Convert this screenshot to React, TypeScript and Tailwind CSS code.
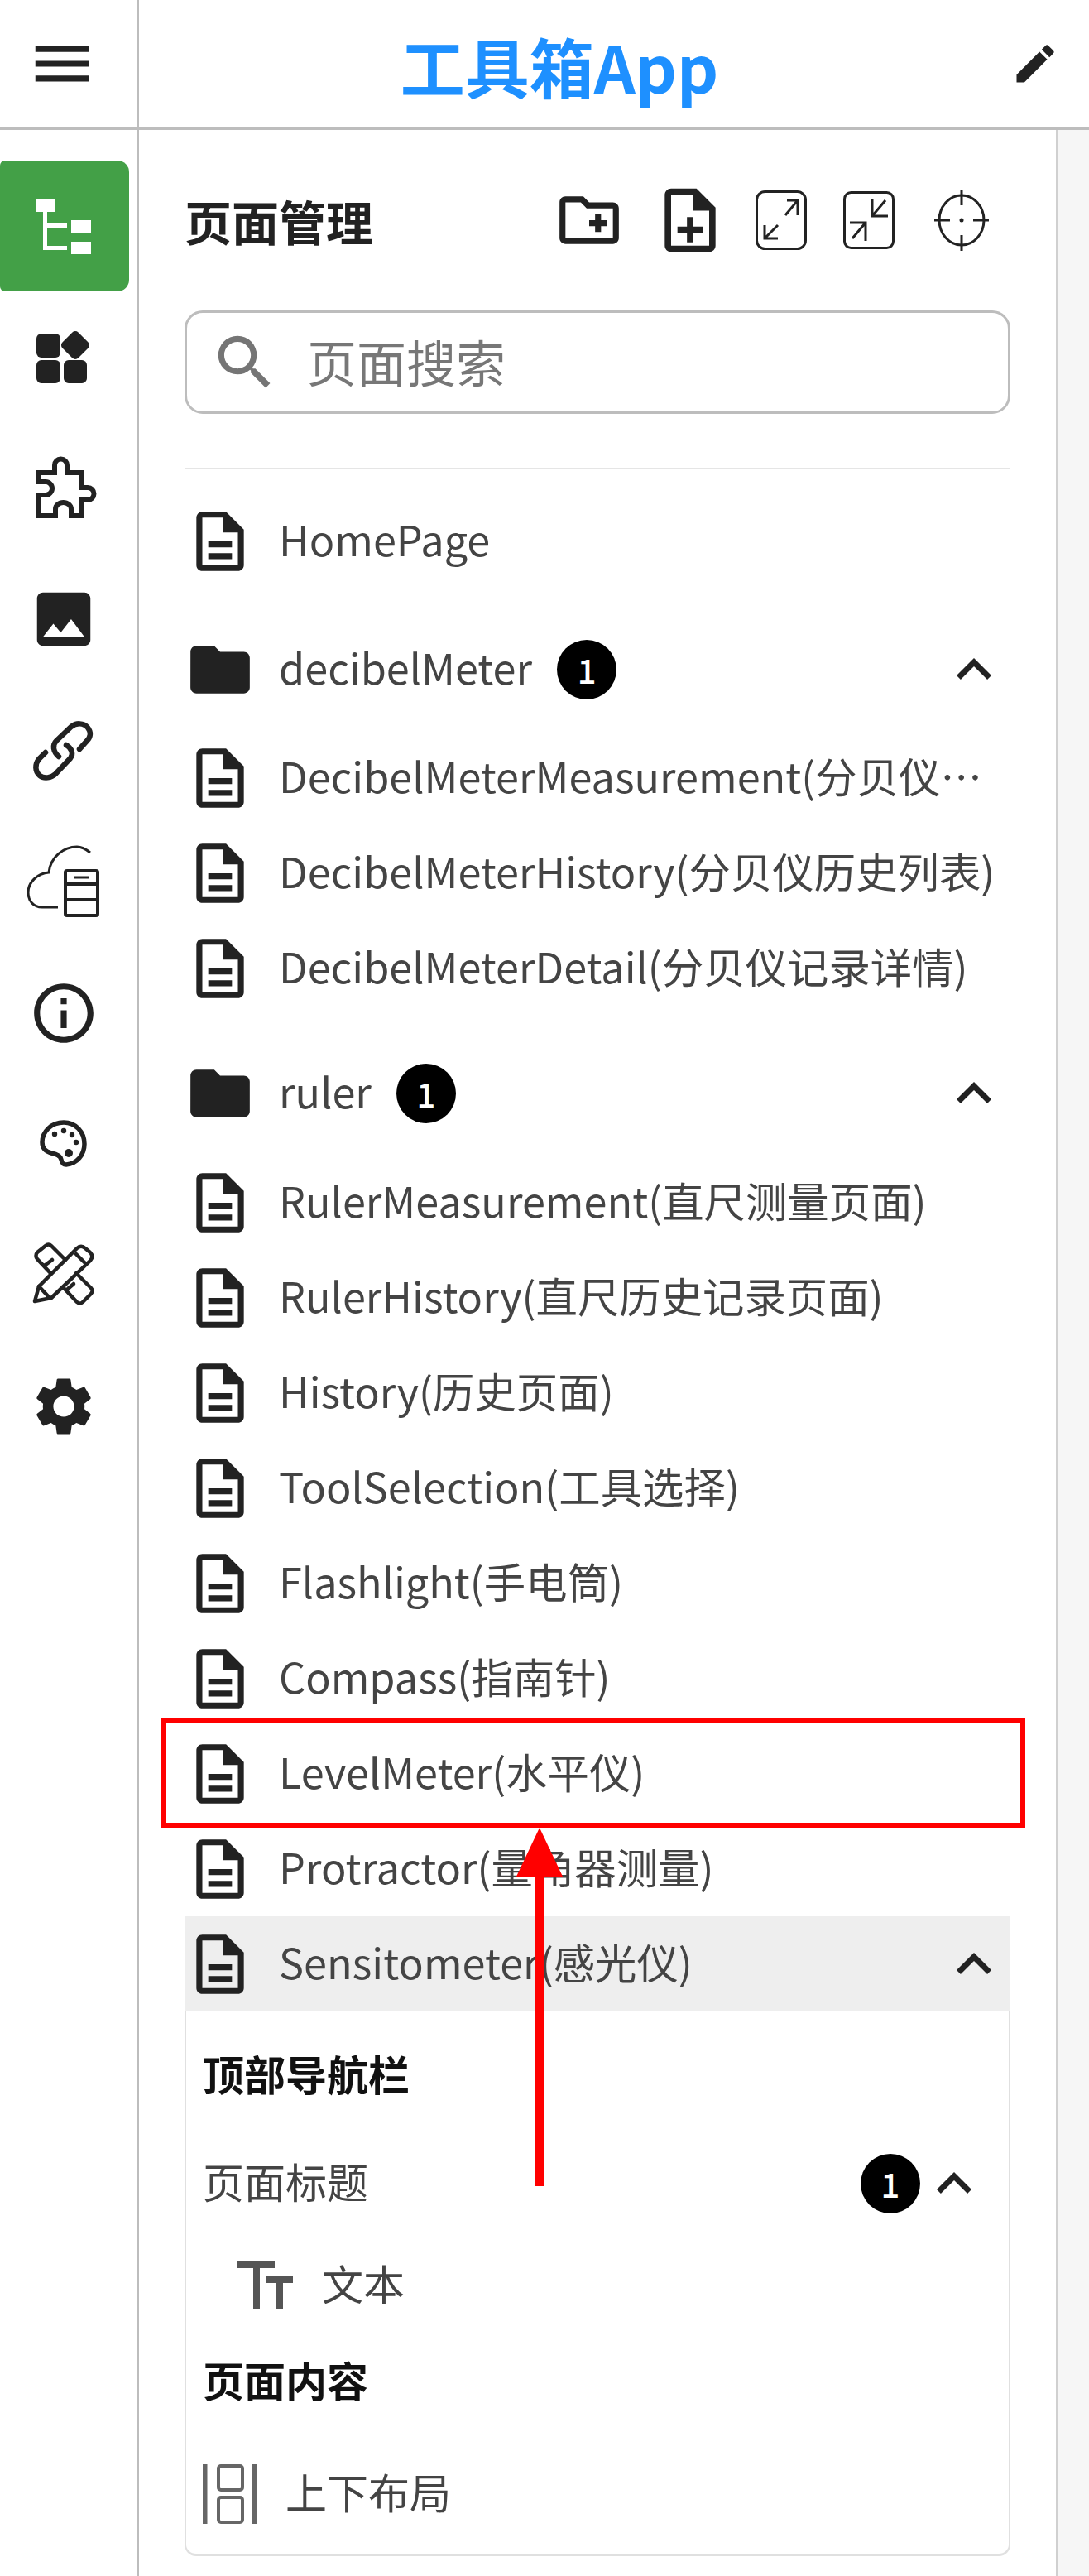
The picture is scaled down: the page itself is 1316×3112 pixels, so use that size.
import {
  MdMenu,
  MdEdit,
  MdOutlineCreateNewFolder,
  MdOutlineNoteAdd,
  MdSearch,
  MdImage,
  MdInfoOutline,
  MdSettings,
  MdOutlineDescription,
  MdFolder,
  MdExpandLess,
} from 'react-icons/md'

function TreeIcon() {
  return (
    <svg width="84" height="84" viewBox="0 0 84 84" fill="#fff">
      <rect x="7" y="10" width="23" height="15" />
      <rect x="50" y="35" width="24" height="15" />
      <rect x="50" y="61" width="24" height="15" />
      <rect x="16" y="25" width="5" height="46" />
      <rect x="16" y="39" width="29" height="5" />
      <rect x="16" y="66" width="29" height="5" />
    </svg>
  )
}

function WidgetsIcon() {
  return (
    <svg width="120" height="120" viewBox="-3 -19 120 120" fill="#222">
      <rect x="24" y="13" width="29" height="29" rx="6" />
      <rect x="24" y="45" width="29" height="28" rx="6" />
      <rect x="57" y="45" width="28" height="28" rx="6" />
      <rect x="57.5" y="13.5" width="27" height="27" rx="5" transform="rotate(45 71 27)" />
    </svg>
  )
}

function PuzzleIcon() {
  return (
    <svg width="120" height="120" viewBox="-3 0 120 120" fill="none" stroke="#222" strokeWidth="6">
      <path d="M27 41H46V32A7.5 7.5 0 0 1 61 32V41H78V59H86A7.5 7.5 0 0 1 86 74H78V93H66V85A9.5 8 0 0 0 47 85V93H27V68H35A8 8 0 0 0 35 52H27Z" />
    </svg>
  )
}

function LinkIcon() {
  return (
    <svg width="120" height="120" viewBox="-3 -3 120 120" fill="none" stroke="#222" strokeWidth="6.5" strokeLinecap="round">
      <path d="M51 64C44 58 43 50 48 45L66 28C72 23 81 23 86 29C90 34 90 40 85 45L76 55" />
      <path d="M35 59L27 67C22 73 22 82 28 87C33 91 42 90 47 85L65 66C69 61 67 54 60 50" />
    </svg>
  )
}

function PaletteIcon() {
  return (
    <svg width="120" height="120" viewBox="-3 2 120 120" fill="none" stroke="#222" strokeWidth="5.5">
      <path d="M57 36C42 36 31 47 31 60C31 68 35 71 42 73C48 74 53 76 54 81C55 86 57 87 60 87C73 86 82 75 82 62C82 47 71 36 57 36Z" />
      <g fill="#222" stroke="none">
        <circle cx="46" cy="50" r="3.2" />
        <circle cx="57" cy="46" r="3.2" />
        <circle cx="67" cy="51" r="3.2" />
        <circle cx="72" cy="60" r="3.2" />
        <circle cx="63" cy="73" r="5" />
      </g>
    </svg>
  )
}

function DesignIcon() {
  return (
    <svg width="120" height="120" viewBox="-3 1 120 120" fill="none" stroke="#222" strokeWidth="4.5" strokeLinejoin="round" strokeLinecap="round">
      <path d="M22 92L27 74L73 28C76 25 80 25 83 28L89 33C92 36 92 40 89 43L42 88Z" />
      <path d="M72 35L83 46M27 74L40 88" />
      <path d="M40 57L25 41C23 39 23 35 25 33L35 25C37 23 40 23 42 25L59 42M35 48L43 42" />
      <path d="M72 58L90 76C92 78 92 81 90 83L80 93C78 95 75 95 73 93L57 76M62 77L69 71" />
    </svg>
  )
}

function CloudServerIcon() {
  return (
    <svg width="88" height="88" viewBox="0 0 88 88" fill="none" stroke="#222" strokeWidth="3">
      <path d="M37 75H18C7 75 1 67 1 57C1 45 12 34 26 33C28 14 44 2 60 2C66 2 71 5 76 9" />
      <rect x="46" y="31" width="39" height="54" rx="2" strokeWidth="4" />
      <path d="M46 47H85M46 66H85" strokeWidth="4" />
      <path d="M57 39H74" />
    </svg>
  )
}

function ExpandBoxIcon() {
  return (
    <svg width="62" height="72" viewBox="0 0 62 72" fill="none" stroke="#222" strokeWidth="3">
      <rect x="1.5" y="1.5" width="59" height="69" rx="10" />
      <path d="M36 30L51 12M38 12H51V30M27 42L11 58M11 42V58H27" />
    </svg>
  )
}

function CompressBoxIcon() {
  return (
    <svg width="62" height="70" viewBox="0 0 62 70" fill="none" stroke="#222" strokeWidth="3">
      <rect x="1.5" y="1.5" width="59" height="67" rx="8" />
      <path d="M51 11L35 30M35 9V30H54M11 57L27 38M8 38H27V60" />
    </svg>
  )
}

function CrosshairIcon() {
  return (
    <svg width="66" height="74" viewBox="0 0 66 74" fill="none" stroke="#222" strokeWidth="3">
      <ellipse cx="33" cy="37" rx="27" ry="30" />
      <path d="M33 0V19M33 55V74M0 37H19M47 37H66" />
      <circle cx="33" cy="37" r="2.5" fill="#222" stroke="none" />
    </svg>
  )
}

function TextIcon() {
  return (
    <svg width="68" height="58" viewBox="0 0 68 58" fill="#555">
      <rect x="0" y="0" width="46" height="8" />
      <rect x="20" y="0" width="8" height="58" />
      <rect x="36" y="18" width="32" height="8" />
      <rect x="48" y="18" width="8" height="40" />
    </svg>
  )
}

function LayoutIcon() {
  return (
    <svg width="66" height="72" viewBox="0 0 66 72" fill="none" stroke="#666" strokeWidth="4">
      <rect x="0" y="0" width="5.5" height="72" fill="#666" stroke="none" />
      <rect x="60" y="0" width="5.5" height="72" fill="#666" stroke="none" />
      <rect x="19" y="2" width="29" height="29" rx="3" />
      <rect x="19" y="40" width="29" height="30" rx="3" />
    </svg>
  )
}

function Badge() {
  return (
    <span className="flex h-[72px] w-[72px] shrink-0 items-center justify-center rounded-full bg-black text-[40px] font-medium text-white">
      1
    </span>
  )
}

function PageRow({ name }: { name: string }) {
  return (
    <div className="flex h-[115px] items-center">
      <MdOutlineDescription size={86} className="shrink-0 text-[#222]" />
      <span className="ml-[28px] max-w-[875px] truncate pb-[5px] text-[50.4px] text-[#444]">{name}</span>
    </div>
  )
}

function FolderRow({ name }: { name: string }) {
  return (
    <div className="flex h-[115px] items-center">
      <MdFolder size={86} className="shrink-0 text-[#222]" />
      <span className="ml-[28px] pb-[5px] text-[50.4px] text-[#444]">{name}</span>
      <span className="ml-[30px]">
        <Badge />
      </span>
      <MdExpandLess size={84} className="ml-auto mr-[2px] text-[#222]" />
    </div>
  )
}

const sideIcons = [
  <WidgetsIcon key="widgets" />,
  <PuzzleIcon key="ext" />,
  <MdImage key="img" size={86} />,
  <LinkIcon key="link" />,
  <CloudServerIcon key="cloud" />,
  <MdInfoOutline key="info" size={86} />,
  <PaletteIcon key="palette" />,
  <DesignIcon key="design" />,
  <MdSettings key="settings" size={84} />,
]

const decibelPages = [
  'DecibelMeterMeasurement(分贝仪测量页面)',
  'DecibelMeterHistory(分贝仪历史列表)',
  'DecibelMeterDetail(分贝仪记录详情)',
]

const rulerPages = [
  'RulerMeasurement(直尺测量页面)',
  'RulerHistory(直尺历史记录页面)',
  'History(历史页面)',
  'ToolSelection(工具选择)',
  'Flashlight(手电筒)',
  'Compass(指南针)',
  'LevelMeter(水平仪)',
  'Protractor(量角器测量)',
]

export default function App() {
  return (
    <div className="relative flex h-[3112px] w-[1316px] flex-col overflow-hidden bg-white font-['Noto_Sans_CJK_SC',sans-serif]">
      {/* Header */}
      <div className="flex h-[157px] shrink-0 border-b-[3px] border-[#bdbdbd]">
        <div className="flex w-[168px] shrink-0 items-center justify-center border-r-2 border-[#bdbdbd] pr-[16px]">
          <MdMenu size={86} className="text-[#222]" />
        </div>
        <div className="flex flex-1 items-center justify-center pr-[2px] pt-[3px] text-[78px] font-bold leading-none text-[#1e90ff]">
          工具箱App
        </div>
        <div className="flex w-[130px] shrink-0 items-center justify-center">
          <MdEdit size={60} className="text-[#222]" />
        </div>
      </div>

      <div className="flex min-h-0 flex-1">
        {/* Side nav */}
        <div className="flex w-[168px] shrink-0 flex-col border-r-2 border-[#bdbdbd] pt-[37px] text-[#222]">
          <div className="flex h-[158px] w-[156px] items-center justify-center rounded-r-[14px] rounded-l-[6px] bg-[#43a047]">
            <TreeIcon />
          </div>
          {sideIcons.map((icon, i) => (
            <div key={i} className="flex h-[158.5px] w-[154px] items-center justify-center">
              {icon}
            </div>
          ))}
        </div>

        {/* Page tree */}
        <div className="min-w-0 flex-1 px-[55px]">
          <div className="mt-[42px] flex h-[120px] items-center justify-between pt-[14px]">
            <span className="text-[57px] font-bold leading-none text-[#222]">页面管理</span>
            <div className="mr-[26px] flex items-center text-[#222]">
              <MdOutlineCreateNewFolder size={86} />
              <MdOutlineNoteAdd size={92} className="ml-[33px]" />
              <span className="ml-[33px]">
                <ExpandBoxIcon />
              </span>
              <span className="ml-[44px]">
                <CompressBoxIcon />
              </span>
              <span className="ml-[48px]">
                <CrosshairIcon />
              </span>
            </div>
          </div>

          <div className="mt-[56px] flex h-[125px] items-center rounded-[22px] border-[3px] border-[#bdbdbd] pl-[27px]">
            <MdSearch size={86} className="text-[#757575]" />
            <span className="ml-[32px] pb-[4px] text-[60px] text-[#777]">页面搜索</span>
          </div>

          <div className="mt-[65px] h-[2px] bg-[#e5e5e5]" />

          <div className="mt-[29px]">
            <PageRow name="HomePage" />
          </div>

          <div className="mt-[40px]">
            <FolderRow name="decibelMeter" />
          </div>
          <div className="mt-[16px]">
            {decibelPages.map((p) => (
              <PageRow key={p} name={p} />
            ))}
          </div>

          <div className="mt-[36px]">
            <FolderRow name="ruler" />
          </div>
          <div className="mt-[17px]">
            {rulerPages.map((p) => (
              <PageRow key={p} name={p} />
            ))}
          </div>

          {/* Selected page */}
          <div className="flex h-[115px] items-center bg-[#eeeeee]">
            <MdOutlineDescription size={86} className="shrink-0 text-[#222]" />
            <span className="ml-[28px] pb-[5px] text-[50.4px] text-[#444]">Sensitometer(感光仪)</span>
            <MdExpandLess size={84} className="ml-auto mr-[2px] text-[#222]" />
          </div>
          <div className="h-[658px] rounded-b-[14px] border-x-2 border-b-[3px] border-[#e0e0e0] px-[20px] pt-[20px]">
            <div className="flex h-[115px] items-center pb-[6px] text-[50px] font-bold text-[#111]">顶部导航栏</div>
            <div className="mt-[15px] flex h-[115px] items-center text-[50px] text-[#444]">
              <span className="pb-[6px]">页面标题</span>
              <span className="ml-auto">
                <Badge />
              </span>
              <MdExpandLess size={84} className="ml-[-1px] mr-[4px] text-[#222]" />
            </div>
            <div className="mt-[8px] flex h-[115px] items-center pl-[41px] text-[50px] text-[#444]">
              <TextIcon />
              <span className="ml-[35px] pb-[6px]">文本</span>
            </div>
            <div className="mt-[2px] flex h-[115px] items-center pb-[6px] text-[50px] font-bold text-[#111]">页面内容</div>
            <div className="mt-[20px] flex h-[115px] items-center text-[50px] text-[#444]">
              <LayoutIcon />
              <span className="ml-[34px] pb-[6px]">上下布局</span>
            </div>
          </div>
        </div>

        <div className="w-[40px] shrink-0 border-l-2 border-[#d0d0d0] bg-[#f6f6f6]" />
      </div>

      {/* Annotation overlay */}
      <div className="absolute left-[194px] top-[2076px] h-[132px] w-[1045px] border-[6px] border-[#ff0000]" />
      <svg className="absolute left-[620px] top-[2205px]" width="64" height="440" viewBox="0 0 64 440">
        <path d="M32 3L60 62H37V436H27V62H4Z" fill="#ff0000" />
      </svg>
    </div>
  )
}
